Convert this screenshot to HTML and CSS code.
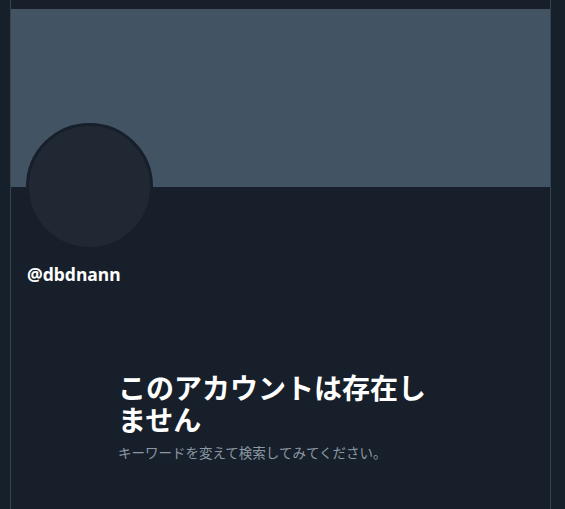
FILE: index.html
```html
<!DOCTYPE html>
<html lang="ja">

<head>
    <meta charset="UTF-8">
    <meta name="viewport" content="width=device-width, initial-scale=1.0">
    <title>プロフィール</title>
    <link rel="stylesheet" href="styles.css">
</head>

<body>
    <div class="column">
        <div class="banner"></div>

        <div class="profile">
            <div class="avatar"></div>
            <div class="handle">@dbdnann</div>
        </div>

        <div class="empty-state">
            <h2>このアカウントは存在しません</h2>
            <p>キーワードを変えて検索してみてください。</p>
        </div>
    </div>
</body>

</html>
```

FILE: styles.css
```css
body {
    margin: 0;
    padding: 0;
    background-color: #15202b;
    color: #fff;
    font-family: "Noto Sans", "Noto Sans CJK JP", sans-serif;
}

.column {
    width: 541px;
    min-height: 100vh;
    margin-left: 10px;
    padding-top: 9px;
    box-sizing: border-box;
    border-left: 1px solid #38444d;
    border-right: 1px solid #38444d;
    background-color: #17202a;
}

.banner {
    height: 178px;
    background-color: #425364;
}

.profile {
    padding: 0 16px;
}

.avatar {
    width: 121px;
    height: 121px;
    margin-top: -64px;
    margin-left: -1px;
    border: 3px solid #17202a;
    border-radius: 50%;
    background-color: #202833;
}

.handle {
    margin-top: 12px;
    font-size: 17.5px;
    font-weight: bold;
    line-height: 24px;
}

.empty-state {
    width: 320px;
    margin: 85px 0 0 107px;
}

.empty-state h2 {
    margin: 0;
    font-family: "Noto Sans CJK JP", sans-serif;
    font-size: 28px;
    font-weight: bold;
    line-height: 32px;
}

.empty-state p {
    margin: 8px 0 0;
    color: #8b98a5;
    font-family: "Noto Sans CJK JP", sans-serif;
    font-size: 13.5px;
    line-height: 18px;
}
```
